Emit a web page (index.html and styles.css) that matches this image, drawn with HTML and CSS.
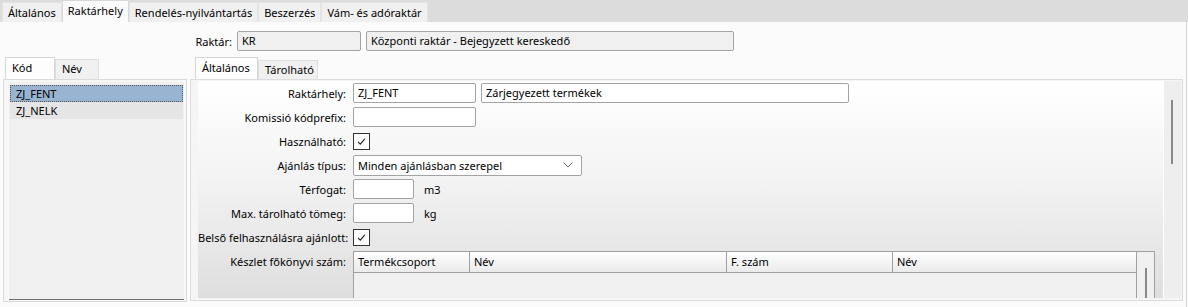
FILE: index.html
```html
<!DOCTYPE html>
<html lang="hu">
<head>
    <meta charset="UTF-8">
    <title>Raktárhely</title>
    <link rel="stylesheet" href="styles.css">
</head>
<body>
    <div class="tabbar">
        <div class="tab">Általános</div>
        <div class="tab active">Raktárhely</div>
        <div class="tab">Rendelés-nyilvántartás</div>
        <div class="tab">Beszerzés</div>
        <div class="tab">Vám- és adóraktár</div>
    </div>

    <div class="page">
        <div class="store-row">
            <span class="store-label">Raktár:</span>
            <div class="field readonly store-code">KR</div>
            <div class="field readonly store-name">Központi raktár - Bejegyzett kereskedő</div>
        </div>

        <div class="panels">
            <div class="side">
                <div class="subtabs">
                    <div class="subtab active tab-kod">Kód</div>
                    <div class="subtab tab-nev">Név</div>
                </div>
                <div class="side-body">
                    <div class="list">
                        <div class="list-item selected">ZJ_FENT</div>
                        <div class="list-item">ZJ_NELK</div>
                    </div>
                </div>
            </div>

            <div class="detail">
                <div class="subtabs">
                    <div class="subtab active tab-altalanos">Általános</div>
                    <div class="subtab tab-tarolhato">Tárolható</div>
                </div>
                <div class="detail-body">
                    <div class="form">
                        <div class="form-row">
                            <span class="label">Raktárhely:</span>
                            <div class="field w-code">ZJ_FENT</div>
                            <div class="field w-name">Zárjegyezett termékek</div>
                        </div>
                        <div class="form-row">
                            <span class="label">Komissió kódprefix:</span>
                            <div class="field w-code"></div>
                        </div>
                        <div class="form-row">
                            <span class="label">Használható:</span>
                            <div class="checkbox">
                                <svg width="15" height="15" viewBox="0 0 15 15"><path d="M4 7.8 L6.3 10.2 L10.8 4.8" fill="none" stroke="#222" stroke-width="1.2"/></svg>
                            </div>
                        </div>
                        <div class="form-row">
                            <span class="label">Ajánlás típus:</span>
                            <div class="field select">
                                <span>Minden ajánlásban szerepel</span>
                                <svg width="10" height="6" viewBox="0 0 10 6"><path d="M0.5 0.5 L5 5 L9.5 0.5" fill="none" stroke="#6a6a6a" stroke-width="1"/></svg>
                            </div>
                        </div>
                        <div class="form-row">
                            <span class="label">Térfogat:</span>
                            <div class="field w-small"></div>
                            <span class="unit">m3</span>
                        </div>
                        <div class="form-row">
                            <span class="label">Max. tárolható tömeg:</span>
                            <div class="field w-small"></div>
                            <span class="unit">kg</span>
                        </div>
                        <div class="form-row">
                            <span class="label">Belső felhasználásra ajánlott:</span>
                            <div class="checkbox">
                                <svg width="15" height="15" viewBox="0 0 15 15"><path d="M4 7.8 L6.3 10.2 L10.8 4.8" fill="none" stroke="#222" stroke-width="1.2"/></svg>
                            </div>
                        </div>
                        <div class="form-row grid-row">
                            <span class="label">Készlet főkönyvi szám:</span>
                            <div class="grid">
                                <div class="grid-main">
                                    <div class="grid-head">
                                        <div class="col col-group">Termékcsoport</div>
                                        <div class="col col-name">Név</div>
                                        <div class="col col-num">F. szám</div>
                                        <div class="col col-last">Név</div>
                                    </div>
                                    <div class="grid-body"></div>
                                </div>
                                <div class="grid-scroll"><div class="grid-thumb"></div></div>
                            </div>
                        </div>
                    </div>
                    <div class="vscroll"><div class="vthumb"></div></div>
                </div>
            </div>
        </div>
    </div>
</body>
</html>
```

FILE: styles.css
```css
* {
    box-sizing: border-box;
}
body {
    margin: 0;
    width: 1188px;
    height: 307px;
    overflow: hidden;
    font-family: "Noto Sans", "Open Sans", sans-serif;
    font-size: 11px;
    color: #000;
    background: #fbfbfb;
}

/* top tabs */
.tabbar {
    height: 22px;
    background: #dcdcdc;
    display: flex;
    align-items: flex-end;
    padding-left: 2px;
}
.tab {
    height: 20px;
    line-height: 19px;
    padding: 0 5px;
    background: #f0f0f0;
    border: 1px solid #e4e4e4;
    border-bottom: none;
}
.tab.active {
    height: 22px;
    line-height: 20px;
    background: #fbfbfb;
    border-color: #d8d8d8;
}

.page {
    height: 285px;
    border-right: 1px solid #d4d4d4;
    width: 1187px;
}

/* Raktár header */
.store-row {
    display: flex;
    align-items: center;
    padding-top: 4px;
    height: 34px;
}
.store-label {
    width: 232px;
    text-align: right;
    margin-right: 5px;
}
.field {
    height: 20px;
    line-height: 18px;
    padding: 0 4px;
    background: #fff;
    border: 1px solid #a3a3a3;
    border-radius: 2px;
    white-space: nowrap;
    overflow: hidden;
}
.field.readonly {
    background: #f0f0f0;
}
.store-code {
    width: 124px;
    margin-right: 5px;
}
.store-name {
    width: 368px;
}

/* panels */
.panels {
    display: flex;
    gap: 3px;
    padding: 0 3px;
    height: 246px;
}
.subtabs {
    height: 23px;
    display: flex;
    align-items: flex-end;
}
.subtab {
    height: 20px;
    line-height: 18px;
    padding-left: 6px;
    background: #f0f0f0;
    border: 1px solid #dedede;
    border-bottom: none;
}
.subtab.active {
    height: 22px;
    line-height: 20px;
    background: #fdfdfd;
    border-color: #d6d6d6;
}
.tab-kod { width: 50px; }
.tab-nev { width: 44px; }
.tab-altalanos { width: 63px; }
.tab-tarolhato { width: 60px; height: 19px; }

.side {
    width: 184px;
}
.side .subtabs {
    padding-left: 2px;
}
.side-body {
    height: 223px;
    border: 1px solid #dadada;
    background: #f7f7f7;
    padding: 2px 2px 2px 5px;
}
.list {
    height: 218px;
    padding: 3px 1px 0;
    background: #f0f0f0;
    border-bottom: 1px solid #6e6e6e;
}
.list-item {
    height: 17px;
    line-height: 15px;
    padding-left: 5px;
    background: #e5e5e5;
    border: 1px solid transparent;
}
.list-item.selected {
    background: #99b4d1;
    border: 1px dotted #555;
}

.detail {
    flex: 1;
}
.detail .subtabs {
    padding-left: 5px;
}
.detail-body {
    height: 222px;
    display: flex;
    border: 1px solid #dcdcdc;
    background: #f5f5f5;
    padding: 1px 1px 2px 7px;
}

/* form */
.form {
    flex: 1;
    overflow: hidden;
    background: linear-gradient(#ffffff, #f3f3f3 45%, #dedede);
    border-right: 1px solid #fff;
}
.form-row {
    display: flex;
    align-items: center;
    height: 24px;
}
.label {
    width: 148px;
    margin-right: 7px;
    text-align: right;
    white-space: nowrap;
}
.w-code { width: 123px; }
.w-name { width: 368px; margin-left: 5px; }
.w-small { width: 61px; }
.unit {
    margin-left: 10px;
}
.checkbox {
    width: 17px;
    height: 17px;
    border: 1px solid #333;
    background: #fff;
}
.checkbox svg {
    display: block;
}
.select {
    width: 229px;
    height: 21px;
    line-height: 19px;
    display: flex;
    align-items: center;
    justify-content: space-between;
    padding-right: 8px;
}

/* grid */
.grid-row {
    align-items: flex-start;
    margin-top: 2px;
    height: 60px;
}
.grid-row .label {
    line-height: 22px;
}
.grid {
    width: 802px;
    height: 60px;
    display: flex;
    border: 1px solid #a0a0a0;
    border-bottom: none;
}
.grid-main {
    flex: 1;
    display: flex;
    flex-direction: column;
}
.grid-head {
    display: flex;
    height: 21px;
    background: linear-gradient(#fefefe, #ebebeb);
    border-bottom: 1px solid #a0a0a0;
}
.col {
    line-height: 20px;
    padding-left: 4px;
    border-right: 1px solid #a0a0a0;
}
.col-group { width: 116px; }
.col-name { width: 257px; }
.col-num { width: 166px; }
.col-last { flex: 1; border-right: none; }
.grid-body {
    flex: 1;
    background: #f0f0f0;
}
.grid-scroll {
    width: 18px;
    border-left: 1px solid #a0a0a0;
    background: #f0f0f0;
    padding: 16px 0 0 8px;
}
.grid-thumb {
    width: 2px;
    height: 40px;
    background: #888;
}

.vscroll {
    width: 17px;
    background: #eeeeee;
    padding: 19px 0 0 7px;
}
.vthumb {
    width: 2px;
    height: 64px;
    background: #888;
}
```
